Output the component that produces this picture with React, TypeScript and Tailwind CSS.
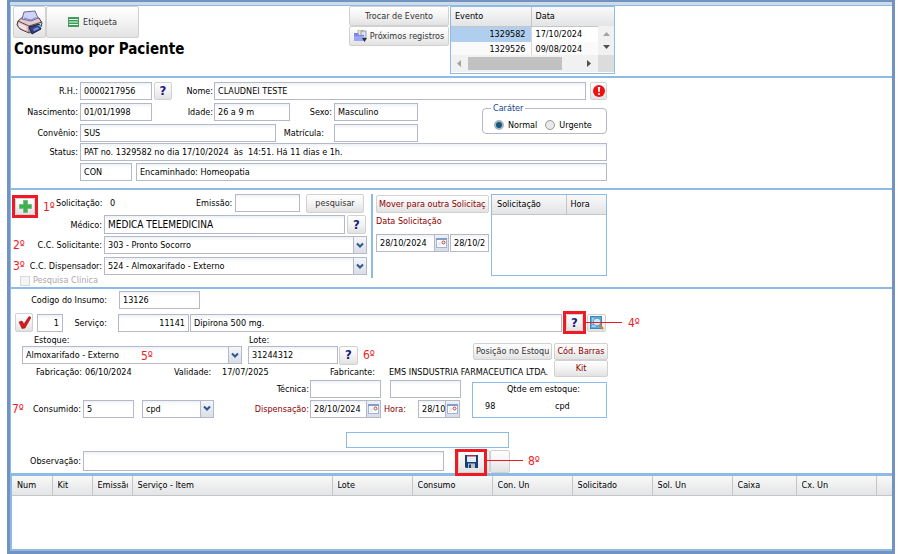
import React from "react";

const FIELD =
  "block min-w-0 border border-[#b5b8c8] bg-linear-to-b from-[#eef2f5] to-white to-25% px-[3px] text-black outline-none";
const BTN =
  "flex shrink-0 items-center justify-center overflow-hidden whitespace-nowrap rounded-[2px] border border-[#d1d1d1] bg-linear-to-b from-white from-0% via-[#f3f3f3] via-50% to-[#e2e2e2]";
const HEAD = "bg-linear-to-b from-[#f9f9f9] to-[#e3e4e6]";

type FieldProps = {
  id: string;
  label?: string;
  labelClass?: string;
  className: string;
  value?: string;
  hint?: string;
};

function Field({ id, label, labelClass = "", className, value = "", hint }: FieldProps) {
  return (
    <>
      {label && (
        <label htmlFor={id} className={`shrink-0 whitespace-nowrap text-right ${labelClass}`}>
          {label}
        </label>
      )}
      <input id={id} type="text" aria-label={label ? undefined : hint} defaultValue={value} className={`${FIELD} ${className}`} />
    </>
  );
}

function Combo({ id, label, labelClass = "", className, value, hint }: FieldProps) {
  return (
    <>
      {label && (
        <label htmlFor={id} className={`shrink-0 whitespace-nowrap text-right ${labelClass}`}>
          {label}
        </label>
      )}
      <div className={`relative h-[18px] shrink-0 ${className}`}>
        <select id={id} aria-label={label ? undefined : hint} className={`${FIELD} h-[18px] w-full appearance-none pr-4`}>
          <option>{value}</option>
        </select>
        <span className="pointer-events-none absolute inset-y-0 right-0 flex w-[14px] items-center justify-center border border-[#b5b8c8] bg-linear-to-b from-[#f4f6f8] to-[#d9dfe8]">
          <svg width="8" height="7" viewBox="0 0 8 7" fill="none" stroke="#2d5590" strokeWidth="2">
            <path d="M1 1.5 L4 4.5 L7 1.5" />
          </svg>
        </span>
      </div>
    </>
  );
}

function DateField({ id, label, labelClass = "", className, value, hint }: FieldProps) {
  return (
    <>
      {label && (
        <label htmlFor={id} className={`shrink-0 whitespace-nowrap text-right text-[#8b0000] ${labelClass}`}>
          {label}
        </label>
      )}
      <div className={`flex h-[18px] shrink-0 ${className}`}>
        <input id={id} aria-label={label ? undefined : hint} type="text" defaultValue={value} className={`${FIELD} h-[18px] flex-1 border-r-0 pr-0`} />
        <button
          type="button"
          aria-label="Calendário"
          className="flex w-[15px] shrink-0 items-center justify-center border border-[#b5b8c8] bg-linear-to-b from-[#eef1f5] to-[#d6dde7]"
        >
          <svg width="11" height="10" viewBox="0 0 11 10">
            <rect x="0.5" y="0.5" width="10" height="9" fill="#fff" stroke="#9db4d4" />
            <rect x="0" y="0" width="11" height="2" fill="#7f9fcb" />
            <rect x="2" y="4" width="3" height="4" fill="#e9eef6" />
            <circle cx="7.500" cy="4.500" r="1.500" fill="#fff" stroke="#b5403c" />
          </svg>
        </button>
      </div>
    </>
  );
}

function Help({ className = "" }: { className?: string }) {
  return (
    <button type="button" aria-label="Ajuda" className={`${BTN} text-[13px] font-bold text-[#1a1a80] ${className}`}>
      ?
    </button>
  );
}

function Step({ n, className = "" }: { n: string; className?: string }) {
  return <span className={`text-[12px] leading-4 text-[#ed1c24] ${className}`}>{n}</span>;
}

function PrinterIcon() {
  return (
    <svg width="27" height="25" viewBox="0 0 27 25" strokeLinejoin="round">
      <path d="M2 11 L8 6 L23 8 L26 13 L25 17 L13 23 L4 19 L1 15 Z" fill="#e3c9cb" stroke="#4a3438" />
      <path d="M2 11 L13 16 L26 12" fill="none" stroke="#5e474b" />
      <path d="M13 16 L13 22" stroke="#5e474b" />
      <path d="M6 9 L8 2 L19 1 L22 8 L15 11 Z" fill="#cfd2fa" stroke="#6a6a90" />
      <path d="M8 8 L15 10 L20 7.500" fill="none" stroke="#8287c9" />
      <path d="M3 14 L10 17.500 M3 16 L10 19.500" stroke="#fff" />
      <path d="M13 17 L23 14 L25 19 L16 24 Z" fill="#33407f" stroke="#1c2148" />
      <path d="M17 19 L22 17 L23 19 L18 21 Z" fill="#7b8be0" />
      <path d="M21 15 L25 15 L25 18 Z" fill="#36b8c4" />
    </svg>
  );
}

function ListIcon() {
  return (
    <svg width="11" height="10" viewBox="0 0 11 10">
      <rect width="11" height="10" fill="#3f9d5c" />
      <path d="M1 2.500 H10 M1 5 H10 M1 7.500 H10" stroke="#e9f7ec" strokeWidth="1" />
    </svg>
  );
}

function FolderIcon() {
  return (
    <svg width="13" height="12" viewBox="0 0 13 12">
      <rect x="4" y="0" width="5" height="7" fill="#f5e9a8" stroke="#8b8b6a" strokeWidth="0.6" />
      <rect x="7" y="1" width="5" height="7" fill="#d7dff5" stroke="#63719c" strokeWidth="0.6" />
      <path d="M0 3 H4 L5 5 H10 V11 H0 Z" fill="#7a83ee" />
      <path d="M0 6 H10 V11 H0 Z" fill="#9aa3f7" />
      <path d="M8 8 H13 L10.500 12 Z" fill="#2d3038" />
    </svg>
  );
}

function SearchDocIcon() {
  return (
    <svg width="14" height="14" viewBox="0 0 14 14" fill="none">
      <rect x="0.500" y="0.500" width="11" height="12" fill="#5eaede" stroke="#3c86bd" />
      <path d="M2 3 H4 M2 5 H3 M2 7 H3 M2 10 H6" stroke="#e6f5ff" />
      <circle cx="7" cy="6" r="3.300" fill="#cdeafa" stroke="#e9f4fb" />
      <circle cx="7" cy="6" r="3.800" stroke="#3a78a8" strokeWidth="0.600" />
      <path d="M9.500 9 L13 13" stroke="#c8832c" strokeWidth="2" />
    </svg>
  );
}

const columns: [string, string][] = [
  ["Num", "w-10"],
  ["Kit", "w-10"],
  ["Emissão", "w-10"],
  ["Serviço - Item", "w-[200px]"],
  ["Lote", "w-20"],
  ["Consumo", "w-20"],
  ["Con. Un", "w-20"],
  ["Solicitado", "w-20"],
  ["Sol. Un", "w-20"],
  ["Caixa", "w-16"],
  ["Cx. Un", "w-20"],
  ["", ""],
];

function Header() {
  return (
    <header className="flex h-[70px] shrink-0 items-start pl-0.5">
      <div className="w-[336px] shrink-0">
        <div className="flex h-8">
          <button type="button" aria-label="Imprimir" className={`${BTN} w-[33px]`}>
            <PrinterIcon />
          </button>
          <button type="button" className={`${BTN} w-[93px] gap-1 text-[#333]`}>
            <ListIcon />
            Etiqueta
          </button>
        </div>
        <h1 className="mt-0.5 pl-px text-[15px] leading-[18px] font-bold">Consumo por Paciente</h1>
      </div>
      <div className="flex w-[100px] shrink-0 flex-col">
        <button type="button" className={`${BTN} h-5 text-[#333]`}>
          Trocar de Evento
        </button>
        <button type="button" className={`${BTN} h-5 gap-[3px] text-[#333]`}>
          <FolderIcon />
          Próximos registros
        </button>
      </div>
      <div className="ml-px h-[68px] w-[165px] shrink-0 border border-[#8dbbe6]">
        <div className="flex">
          <table className="w-full table-fixed border-collapse leading-[12px]">
            <thead>
              <tr className={`h-[19px] ${HEAD}`}>
                <th className="w-[80px] border-r border-b border-[#c5c5c5] px-1 text-left font-normal">Evento</th>
                <th className="border-b border-[#c5c5c5] px-1 text-left font-normal">Data</th>
              </tr>
            </thead>
            <tbody>
              <tr className="h-4">
                <td className="border-r border-[#d8d8d8] bg-[#b0cfee] px-[5px] text-right">1329582</td>
                <td className="px-1">17/10/2024</td>
              </tr>
              <tr className="h-[13px]">
                <td className="border-r border-[#d8d8d8] bg-[#fafafa] px-[5px] text-right">1329526</td>
                <td className="bg-[#fafafa] px-1">09/08/2024</td>
              </tr>
            </tbody>
          </table>
          <div className="flex w-4 shrink-0 flex-col">
            <div className={`h-[19px] ${HEAD}`} />
            <div className="flex flex-1 flex-col items-center justify-between bg-[#f1f1f1] py-1.5">
              <svg width="7" height="4" viewBox="0 0 7 4"><path d="M0 4 L3.500 0 L7 4 Z" fill="#a3a3a3" /></svg>
              <svg width="7" height="4" viewBox="0 0 7 4"><path d="M0 0 L3.500 4 L7 0 Z" fill="#505050" /></svg>
            </div>
          </div>
        </div>
        <div className="flex h-[17px]">
          <div className="flex flex-1 items-center bg-[#f1f1f1] pl-1.5">
            <svg width="4" height="7" viewBox="0 0 4 7"><path d="M4 0 L0 3.500 L4 7 Z" fill="#a3a3a3" /></svg>
            <div className="ml-[7px] h-[13px] w-[94px] bg-[#c1c1c1]" />
            <svg className="ml-auto mr-[7px]" width="4" height="7" viewBox="0 0 4 7"><path d="M0 0 L4 3.500 L0 7 Z" fill="#505050" /></svg>
          </div>
          <div className="w-4 bg-[#dcdcdc]" />
        </div>
      </div>
    </header>
  );
}

function Radio({ id, label, checked }: { id: string; label: string; checked?: boolean }) {
  return (
    <label htmlFor={id} className="flex items-center gap-1">
      <input
        id={id}
        type="radio"
        name="carater"
        defaultChecked={checked}
        className="size-[10px] appearance-none rounded-full border border-[#9a9a9a] bg-[#e9e9e9] checked:border-2 checked:border-[#a9b4bc] checked:bg-[#14597f]"
      />
      {label}
    </label>
  );
}

function Patient() {
  return (
    <section className="shrink-0 border-t-2 border-[#8dbbe6]">
      <div className="flex h-[110px] max-w-[596px] flex-col pt-1">
        <div className="flex items-center">
          <Field id="rh" label="R.H.:" labelClass="w-[69px] pr-0.5" className="h-[18px] w-[72px]" value="0000217956" />
          <Help className="ml-0.5 h-[18px] w-[18px]" />
          <Field id="nome" label="Nome:" labelClass="w-[42px] pr-px" className="h-[18px] flex-1" value="CLAUDNEI TESTE" />
          <button type="button" aria-label="Alerta" className={`${BTN} ml-1 h-[18px] w-[17px]`}>
            <svg width="12" height="12" viewBox="0 0 12 12">
              <circle cx="6" cy="6" r="6" fill="#ee1111" />
              <path d="M4.800 2 H7.200 L6.700 7 H5.300 Z" fill="#fff" />
              <circle cx="6" cy="9" r="1" fill="#fff" />
            </svg>
          </button>
        </div>
        <div className="mt-[3px] flex justify-between">
          <div className="flex flex-col gap-[3px]">
            <div className="flex items-center">
              <Field id="nasc" label="Nascimento:" labelClass="w-[69px] pr-0.5" className="h-[18px] w-[72px]" value="01/01/1998" />
              <Field id="idade" label="Idade:" labelClass="w-[62px] pr-px" className="h-[18px] w-[76px]" value="26 a 9 m" />
              <Field id="sexo" label="Sexo:" labelClass="w-[44px] pr-0.5" className="h-[18px] w-[84px]" value="Masculino" />
            </div>
            <div className="flex items-center">
              <Field id="conv" label="Convênio:" labelClass="w-[69px] pr-0.5" className="h-[18px] w-[196px]" value="SUS" />
              <Field id="matr" label="Matrícula:" labelClass="w-[58px] pr-2.5" className="h-[18px] w-[84px]" />
            </div>
          </div>
          <fieldset className="h-[31px] w-[125px] rounded-[4px] border border-[#b5b8c8]">
            <legend className="ml-2 px-0.5 leading-[11px] text-[#15428b]">Caráter</legend>
            <div className="flex gap-2 pt-1 pl-[11px]">
              <Radio id="normal" label="Normal" checked />
              <Radio id="urgente" label="Urgente" />
            </div>
          </fieldset>
        </div>
        <div className="mt-px flex items-center">
          <Field id="status" label="Status:" labelClass="w-[69px] pr-0.5" className="h-[18px] flex-1" value="PAT no. 1329582 no dia 17/10/2024  às  14:51. Há 11 dias e 1h." />
        </div>
        <div className="mt-0.5 flex items-center gap-1 pl-[69px]">
          <Field id="tipo" hint="Tipo" className="h-[18px] w-[52px]" value="CON" />
          <Field id="enc" hint="Encaminhamento" className="h-[18px] flex-1" value="Encaminhado: Homeopatia" />
        </div>
      </div>
    </section>
  );
}

function Request() {
  return (
    <section className="shrink-0 border-t-2 border-[#8dbbe6]">
      <div className="flex h-[97px] items-start">
        <div className="flex w-[356px] shrink-0 flex-col pt-[3px]">
          <div className="flex h-5 items-center">
            <div className="mt-1.5 ml-px flex h-[23px] w-[26px] shrink-0 border-[3px] border-[#ed1c24]">
              <button type="button" aria-label="Adicionar" className={`${BTN} h-full w-full`}>
                <svg width="13" height="13" viewBox="0 0 13 13">
                  <path d="M4.500 0.500 H8.500 V4.500 H12.500 V8.500 H8.500 V12.500 H4.500 V8.500 H0.500 V4.500 H4.500 Z" fill="#39b34a" stroke="#7fb58a" />
                </svg>
              </button>
            </div>
            <Step n="1º" className="mt-2 ml-[5px] w-[13px]" />
            <span className="w-[46px] text-right whitespace-nowrap">Solicitação:</span>
            <span className="ml-2 w-[86px]">0</span>
            <Field id="emissao" label="Emissão:" labelClass="w-[39px] pr-1" className="h-[18px] w-[65px]" />
            <button type="button" className={`${BTN} ml-1.5 h-[19px] w-[58px] text-[#333]`}>
              pesquisar
            </button>
          </div>
          <div className="mt-0.5 flex items-center">
            <Field id="medico" label="Médico:" labelClass="w-[93px] pr-0.5" className="h-[19px] w-[241px] text-[10px]" value="MÉDICA TELEMEDICINA" />
            <Help className="ml-0.5 h-[19px] w-[19px]" />
          </div>
          <div className="mt-0.5 flex items-center">
            <Step n="2º" className="ml-0.5 w-4" />
            <Combo id="ccs" label="C.C. Solicitante:" labelClass="w-[75px] pr-0.5" className="w-[263px]" value="303 - Pronto Socorro" />
          </div>
          <div className="mt-[3px] flex items-center">
            <Step n="3º" className="ml-0.5 w-4" />
            <Combo id="ccd" label="C.C. Dispensador:" labelClass="w-[75px] pr-0.5" className="w-[263px]" value="524 - Almoxarifado - Externo" />
          </div>
          <label htmlFor="clinica" className="flex items-center gap-[3px] pl-[9px] leading-[11px] text-[#a9a9a9]">
            <input id="clinica" type="checkbox" disabled className="size-[10px] appearance-none border border-[#d8d8d8] bg-[#f5f5f5]" />
            Pesquisa Clínica
          </label>
        </div>
        <div className="mt-1 ml-1 h-[84px] w-0.5 shrink-0 bg-[#8dbbe6]" />
        <div className="mt-[5px] ml-[3px] w-[113px] shrink-0">
          <button type="button" className={`${BTN} h-[18px] w-full text-[#8b0000]`}>
            <span className="w-[107px] overflow-hidden text-left">Mover para outra Solicitação</span>
          </button>
          <label htmlFor="dsol" className="block pt-0.5 leading-[13px] text-[#8b0000]">
            Data Solicitação
          </label>
          <div className="mt-1.5 flex gap-px">
            <DateField id="dsol" hint="Data" className="w-[73px]" value="28/10/2024" />
            <Field id="hsol" hint="Hora da solicitação" className="h-[18px] w-[39px]" value="28/10/2024" />
          </div>
        </div>
        <div className="mt-1 ml-0.5 h-[82px] w-[116px] shrink-0 border border-[#8dbbe6]">
          <table className="w-full table-fixed border-collapse">
            <thead>
              <tr className={`h-[19px] ${HEAD}`}>
                <th className="w-[74px] border-r border-b border-[#c5c5c5] px-[5px] text-left font-normal">Solicitação</th>
                <th className="border-b border-[#c5c5c5] px-1 text-left font-normal">Hora</th>
              </tr>
            </thead>
          </table>
        </div>
      </div>
    </section>
  );
}

function Item() {
  return (
    <section className="shrink-0 border-t-2 border-[#8dbbe6]">
      <div className="flex h-[184px] flex-col pt-0.5">
        <div className="flex items-center">
          <Field id="insumo" label="Codigo do Insumo:" labelClass="w-[108px] pr-3" className="h-[18px] w-[81px]" value="13126" />
        </div>
        <div className="mt-0.5 flex h-6 items-center">
          <button type="button" aria-label="Confirmar" className={`${BTN} ml-1 h-[19px] w-[18px]`}>
            <svg width="13" height="13" viewBox="0 0 13 13">
              <path d="M1 6 L4 5 L6 8 L11 0.500 L13 1.500 L7 12 L4 12.500 Z" fill="#d8181c" stroke="#8f1518" strokeWidth="0.600" />
            </svg>
          </button>
          <Field id="seq" hint="Sequência" className="ml-1 h-[18px] w-[26px] text-right" value="1" />
          <Field id="servico" label="Serviço:" labelClass="w-[55px] pr-[11px]" className="h-[18px] w-[71px] text-right" value="11141" />
          <Field id="descr" hint="Descrição" className="ml-px h-[18px] w-[372px]" value="Dipirona 500 mg." />
          <div className="ml-px flex h-[23px] w-[23px] shrink-0 border-[3px] border-[#ed1c24]">
            <Help className="h-full w-full" />
          </div>
          <button type="button" aria-label="Pesquisar item" className={`${BTN} relative ml-px h-[18px] w-[19px] overflow-visible`}>
            <SearchDocIcon />
            <span className="absolute top-[7px] -left-0.5 h-px w-9 bg-[#ed1c24]" />
          </button>
          <Step n="4º" className="ml-[22px]" />
        </div>
        <div className="flex">
          <div className="w-[462px] shrink-0">
            <div className="flex pl-[23px] leading-[11px]">
              <label htmlFor="estoque" className="w-[215px]">Estoque:</label>
              <label htmlFor="lote">Lote:</label>
            </div>
            <div className="relative flex items-center pl-[11px]">
              <Combo id="estoque" className="w-[220px]" value="Almoxarifado - Externo" />
              <Step n="5º" className="absolute top-0.5 left-[130px]" />
              <Field id="lote" hint="Lote" className="ml-1.5 h-[18px] w-[90px]" value="31244312" />
              <Help className="ml-px h-[19px] w-[19px]" />
              <Step n="6º" className="ml-[5px]" />
            </div>
          </div>
          <div className="mt-2 flex items-start gap-0.5">
            <button type="button" className={`${BTN} h-[17px] w-[79px] text-[#333]`}>
              <span className="w-[73px] overflow-hidden text-left">Posição no Estoqu</span>
            </button>
            <div className="flex flex-col">
              <button type="button" className={`${BTN} h-[17px] w-[54px] text-[#8b0000]`}>Cód. Barras</button>
              <button type="button" className={`${BTN} h-[17px] w-[54px] text-[#8b0000]`}>Kit</button>
            </div>
          </div>
        </div>
        <div className="-mt-3 flex h-[14px] items-center pl-[25px] whitespace-nowrap">
          <span className="w-[49px]">Fabricação:</span>
          <span className="w-[89px]">06/10/2024</span>
          <span className="w-12">Validade:</span>
          <span className="w-[108px]">17/07/2025</span>
          <span className="w-[59px]">Fabricante:</span>
          <span>EMS INSDUSTRIA FARMACEUTICA LTDA.</span>
        </div>
        <div className="mt-px flex">
          <div className="flex w-[461px] shrink-0 flex-col gap-0.5">
            <div className="flex items-center">
              <Field id="tec" label="Técnica:" labelClass="w-[299px] pr-px" className="h-[18px] w-[71px]" />
              <Field id="tec2" hint="Nome da técnica" className="ml-[9px] h-[18px] w-[71px]" />
            </div>
            <div className="flex items-center">
              <Step n="7º" className="ml-px w-4" />
              <Field id="cons" label="Consumido:" labelClass="w-[55px] pr-0.5" className="h-[18px] w-[51px]" value="5" />
              <Combo id="un" hint="Unidade" className="ml-2 w-[72px]" value="cpd" />
              <DateField id="disp" label="Dispensação:" labelClass="w-[96px] pr-px" className="w-[71px]" value="28/10/2024" />
              <DateField id="hora" label="Hora:" labelClass="w-[37px] pr-3" className="w-[42px]" value="28/10/2024" />
            </div>
          </div>
          <div className="mt-0.5 flex h-9 w-[135px] shrink-0 flex-col justify-between border border-[#8dbbe6] px-3 pb-[5px]">
            <span className="pl-2 text-center leading-[12px]">Qtde em estoque:</span>
            <div className="flex leading-[12px]">
              <span className="w-[70px]">98</span>
              <span>cpd</span>
            </div>
          </div>
        </div>
        <div className="mt-3.5 flex pl-[335px]">
          <input type="text" aria-label="Mensagem" className="h-4 w-[163px] border border-[#8dbbe6] bg-white px-1 outline-none" />
        </div>
        <div className="mt-0.5 flex h-6 items-center">
          <Field id="obs" label="Observação:" labelClass="w-[72px] pr-0.5" className="h-5 w-[361px]" />
          <div className="relative ml-3.5 flex h-[23px]">
            <button type="button" aria-label="Salvar" className={`${BTN} w-8 pr-1.5`}>
              <svg width="13" height="13" viewBox="0 0 13 13">
                <path d="M0 0 H13 V13 H1 L0 12 Z" fill="#16406f" />
                <rect x="2" y="1" width="9" height="6" fill="#e6edf6" />
                <rect x="2" y="0" width="9" height="1.500" fill="#a82c48" />
                <rect x="3" y="8.500" width="7" height="4.500" fill="#b8c4d4" />
                <rect x="4" y="9.500" width="2" height="3.500" fill="#16406f" />
              </svg>
            </button>
            <button type="button" aria-label="Opções" className={`${BTN} w-5`} />
            <span className="absolute -top-px -left-[3px] z-10 h-[27px] w-8 border-[3px] border-[#ed1c24]" />
            <span className="absolute top-[10px] left-[29px] h-px w-9 bg-[#ed1c24]" />
          </div>
          <Step n="8º" className="ml-[18px]" />
        </div>
      </div>
    </section>
  );
}

export default function App() {
  return (
    <div className="min-h-screen bg-white pr-[5px] pl-[7px] font-['DejaVu_Sans_Condensed','DejaVu_Sans',sans-serif] text-[9px] leading-[14px] text-black">
      <main className="flex min-h-screen flex-col border-x-[3px] border-t-2 border-b-[3px] border-[#7193c1] bg-white">
        <div className="h-[3px] shrink-0 bg-[#d0dbe8]" />
        <div className="flex flex-1 flex-col border-t border-b-2 border-l border-[#8dbbe6]">
          <Header />
          <Patient />
          <Request />
          <Item />
          <div className="flex-1 border-t-[3px] border-l border-[#8dbbe6]">
            <table className="w-full table-fixed border-collapse">
              <thead>
                <tr className={`h-[19px] ${HEAD}`}>
                  {columns.map(([name, width]) => (
                    <th
                      key={name}
                      className={`overflow-hidden border-r border-b border-[#c5c5c5] pr-1 pl-[5px] text-left font-normal whitespace-nowrap last:border-r-0 ${width}`}
                    >
                      <div className="overflow-hidden">{name}</div>
                    </th>
                  ))}
                </tr>
              </thead>
            </table>
          </div>
        </div>
      </main>
    </div>
  );
}
